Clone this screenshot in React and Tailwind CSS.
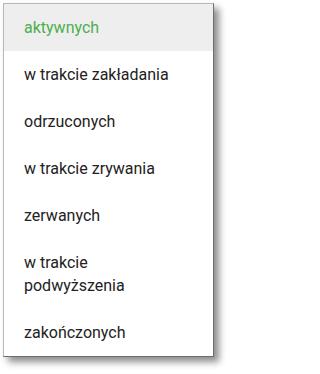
const items = [
  "aktywnych",
  "w trakcie zakładania",
  "odrzuconych",
  "w trakcie zrywania",
  "zerwanych",
  "w trakcie podwyższenia",
  "zakończonych",
];

export default function App() {
  return (
    <div className="w-[233px] h-[374px] bg-white pt-[3px] pl-[3px]" style={{ fontFamily: "Roboto, 'Liberation Sans', sans-serif" }}>
      <div className="w-[211px] border border-[#b8b8b8] border-r-[#6e6e6e] border-b-[#6e6e6e] bg-white shadow-[5px_5px_7px_rgba(0,0,0,0.45)]">
        <ul>
          {items.map((label, i) => (
            <li
              key={label}
              className={
                i === 0
                  ? "bg-[#eeeeee] text-[#4cae4f] text-[16px] pl-5 pr-6 py-3 leading-[23px]"
                  : "text-[#222222] text-[16px] pl-5 pr-6 py-3 leading-[23px]"
              }
            >
              {label}
            </li>
          ))}
        </ul>
      </div>
    </div>
  );
}
